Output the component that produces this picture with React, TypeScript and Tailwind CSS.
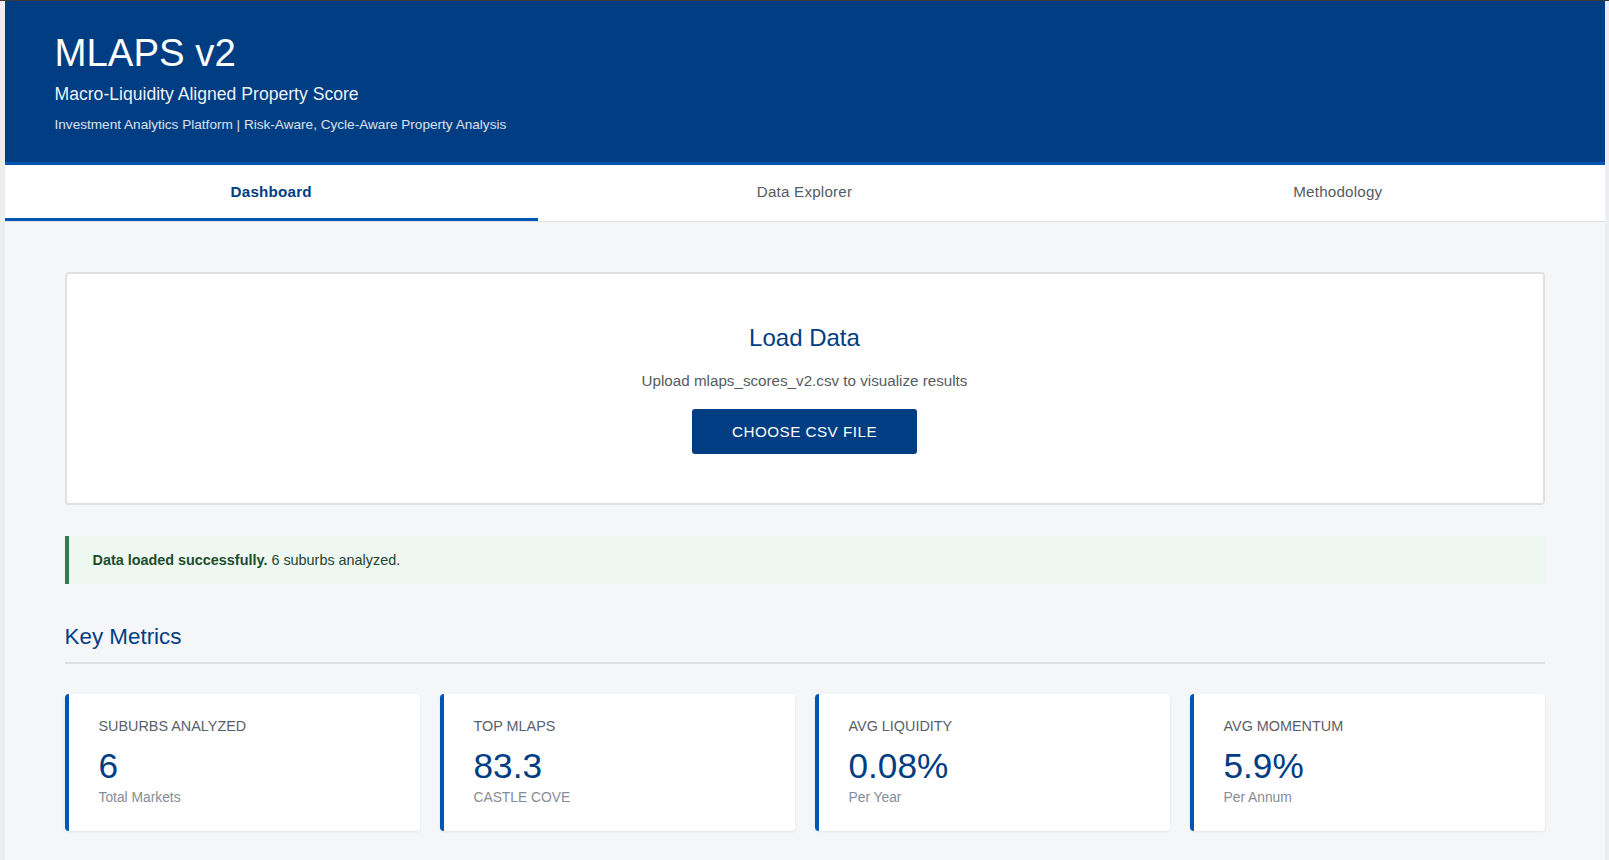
import { useState } from "react";

const tabs = ["Dashboard", "Data Explorer", "Methodology"];

const metrics = [
  { label: "SUBURBS ANALYZED", value: "6", sub: "Total Markets" },
  { label: "TOP MLAPS", value: "83.3", sub: "CASTLE COVE" },
  { label: "AVG LIQUIDITY", value: "0.08%", sub: "Per Year" },
  { label: "AVG MOMENTUM", value: "5.9%", sub: "Per Annum" },
];

export default function App() {
  const [activeTab, setActiveTab] = useState("Dashboard");

  return (
    <div className="min-h-screen bg-[#eceef1] border-t border-[#3a3a3a] font-['Liberation_Sans',Arial,sans-serif]">
      <div className="mx-auto max-w-[1600px] min-h-[859px] bg-[#f5f6f8]">
        {/* HEADER */}
        <header className="bg-[#003d82] border-b-[3px] border-[#0056b3] px-[50px] pt-[29px] pb-[27px] text-white">
          <h1 className="text-[38.4px] leading-[46px] font-normal">MLAPS v2</h1>
          <p className="mt-[5px] text-[17.6px] leading-[26px] text-white/95">
            Macro-Liquidity Aligned Property Score
          </p>
          <p className="mt-[8px] text-[13.6px] leading-[20px] text-white/85">
            Investment Analytics Platform | Risk-Aware, Cycle-Aware Property Analysis
          </p>
        </header>

        {/* TABS */}
        <nav className="grid grid-cols-3 bg-white border-b border-[#dfe1e5]">
          {tabs.map((tab) => {
            const isActive = activeTab === tab;
            return (
              <button
                key={tab}
                onClick={() => setActiveTab(tab)}
                className={`pt-[16px] pb-[14px] border-b-[3px] text-[15.2px] leading-[22.8px] tracking-[0.2px] ${
                  isActive
                    ? "border-[#0056b3] text-[#003d82] font-bold"
                    : "border-transparent text-[#555b63]"
                }`}
              >
                {tab}
              </button>
            );
          })}
        </nav>

        <main className="px-[60px] pt-[50px] pb-10">
          {/* LOAD DATA CARD */}
          <section className="bg-white border-2 border-[#e0e0e0] rounded-[4px] pt-[50px] pb-[49px] flex flex-col items-center">
            <h2 className="text-[24px] leading-[28.8px] text-[#003d82]">Load Data</h2>
            <p className="mt-[17px] text-[15.2px] leading-[22.8px] text-[#555b63]">
              Upload mlaps_scores_v2.csv to visualize results
            </p>
            <button className="mt-[17px] w-[225px] py-[13px] leading-[19px] rounded-[3px] bg-[#003d82] text-white text-[15.2px] tracking-[0.5px]">
              CHOOSE CSV FILE
            </button>
          </section>

          {/* SUCCESS BANNER */}
          <div className="mt-[31px] border-l-4 border-[#2e7d4f] bg-[#eef7f1] pl-6 py-[14px] text-[14.4px] leading-[20px] text-[#24452f]">
            <strong className="font-bold text-[#1d4d2d]">Data loaded successfully.</strong> 6 suburbs analyzed.
          </div>

          {/* KEY METRICS */}
          <h3 className="mt-[39px] pb-3 border-b-2 border-[#e0e0e0] text-[22.4px] leading-[27px] text-[#003d82]">
            Key Metrics
          </h3>

          <div className="mt-[30px] grid grid-cols-4 gap-5">
            {metrics.map((m) => (
              <div
                key={m.label}
                className="bg-white rounded-[4px] border-l-4 border-[#0056b3] shadow-[0_1px_3px_rgba(0,0,0,0.08)] pl-[30px] pr-4 py-[22px]"
              >
                <div className="text-[14.4px] leading-[21px] text-[#5a606b]">{m.label}</div>
                <div className="mt-2 text-[35.2px] leading-[42px] text-[#003d82]">{m.value}</div>
                <div className="text-[13.8px] leading-[22px] text-[#868c96]">{m.sub}</div>
              </div>
            ))}
          </div>
        </main>
      </div>
    </div>
  );
}
